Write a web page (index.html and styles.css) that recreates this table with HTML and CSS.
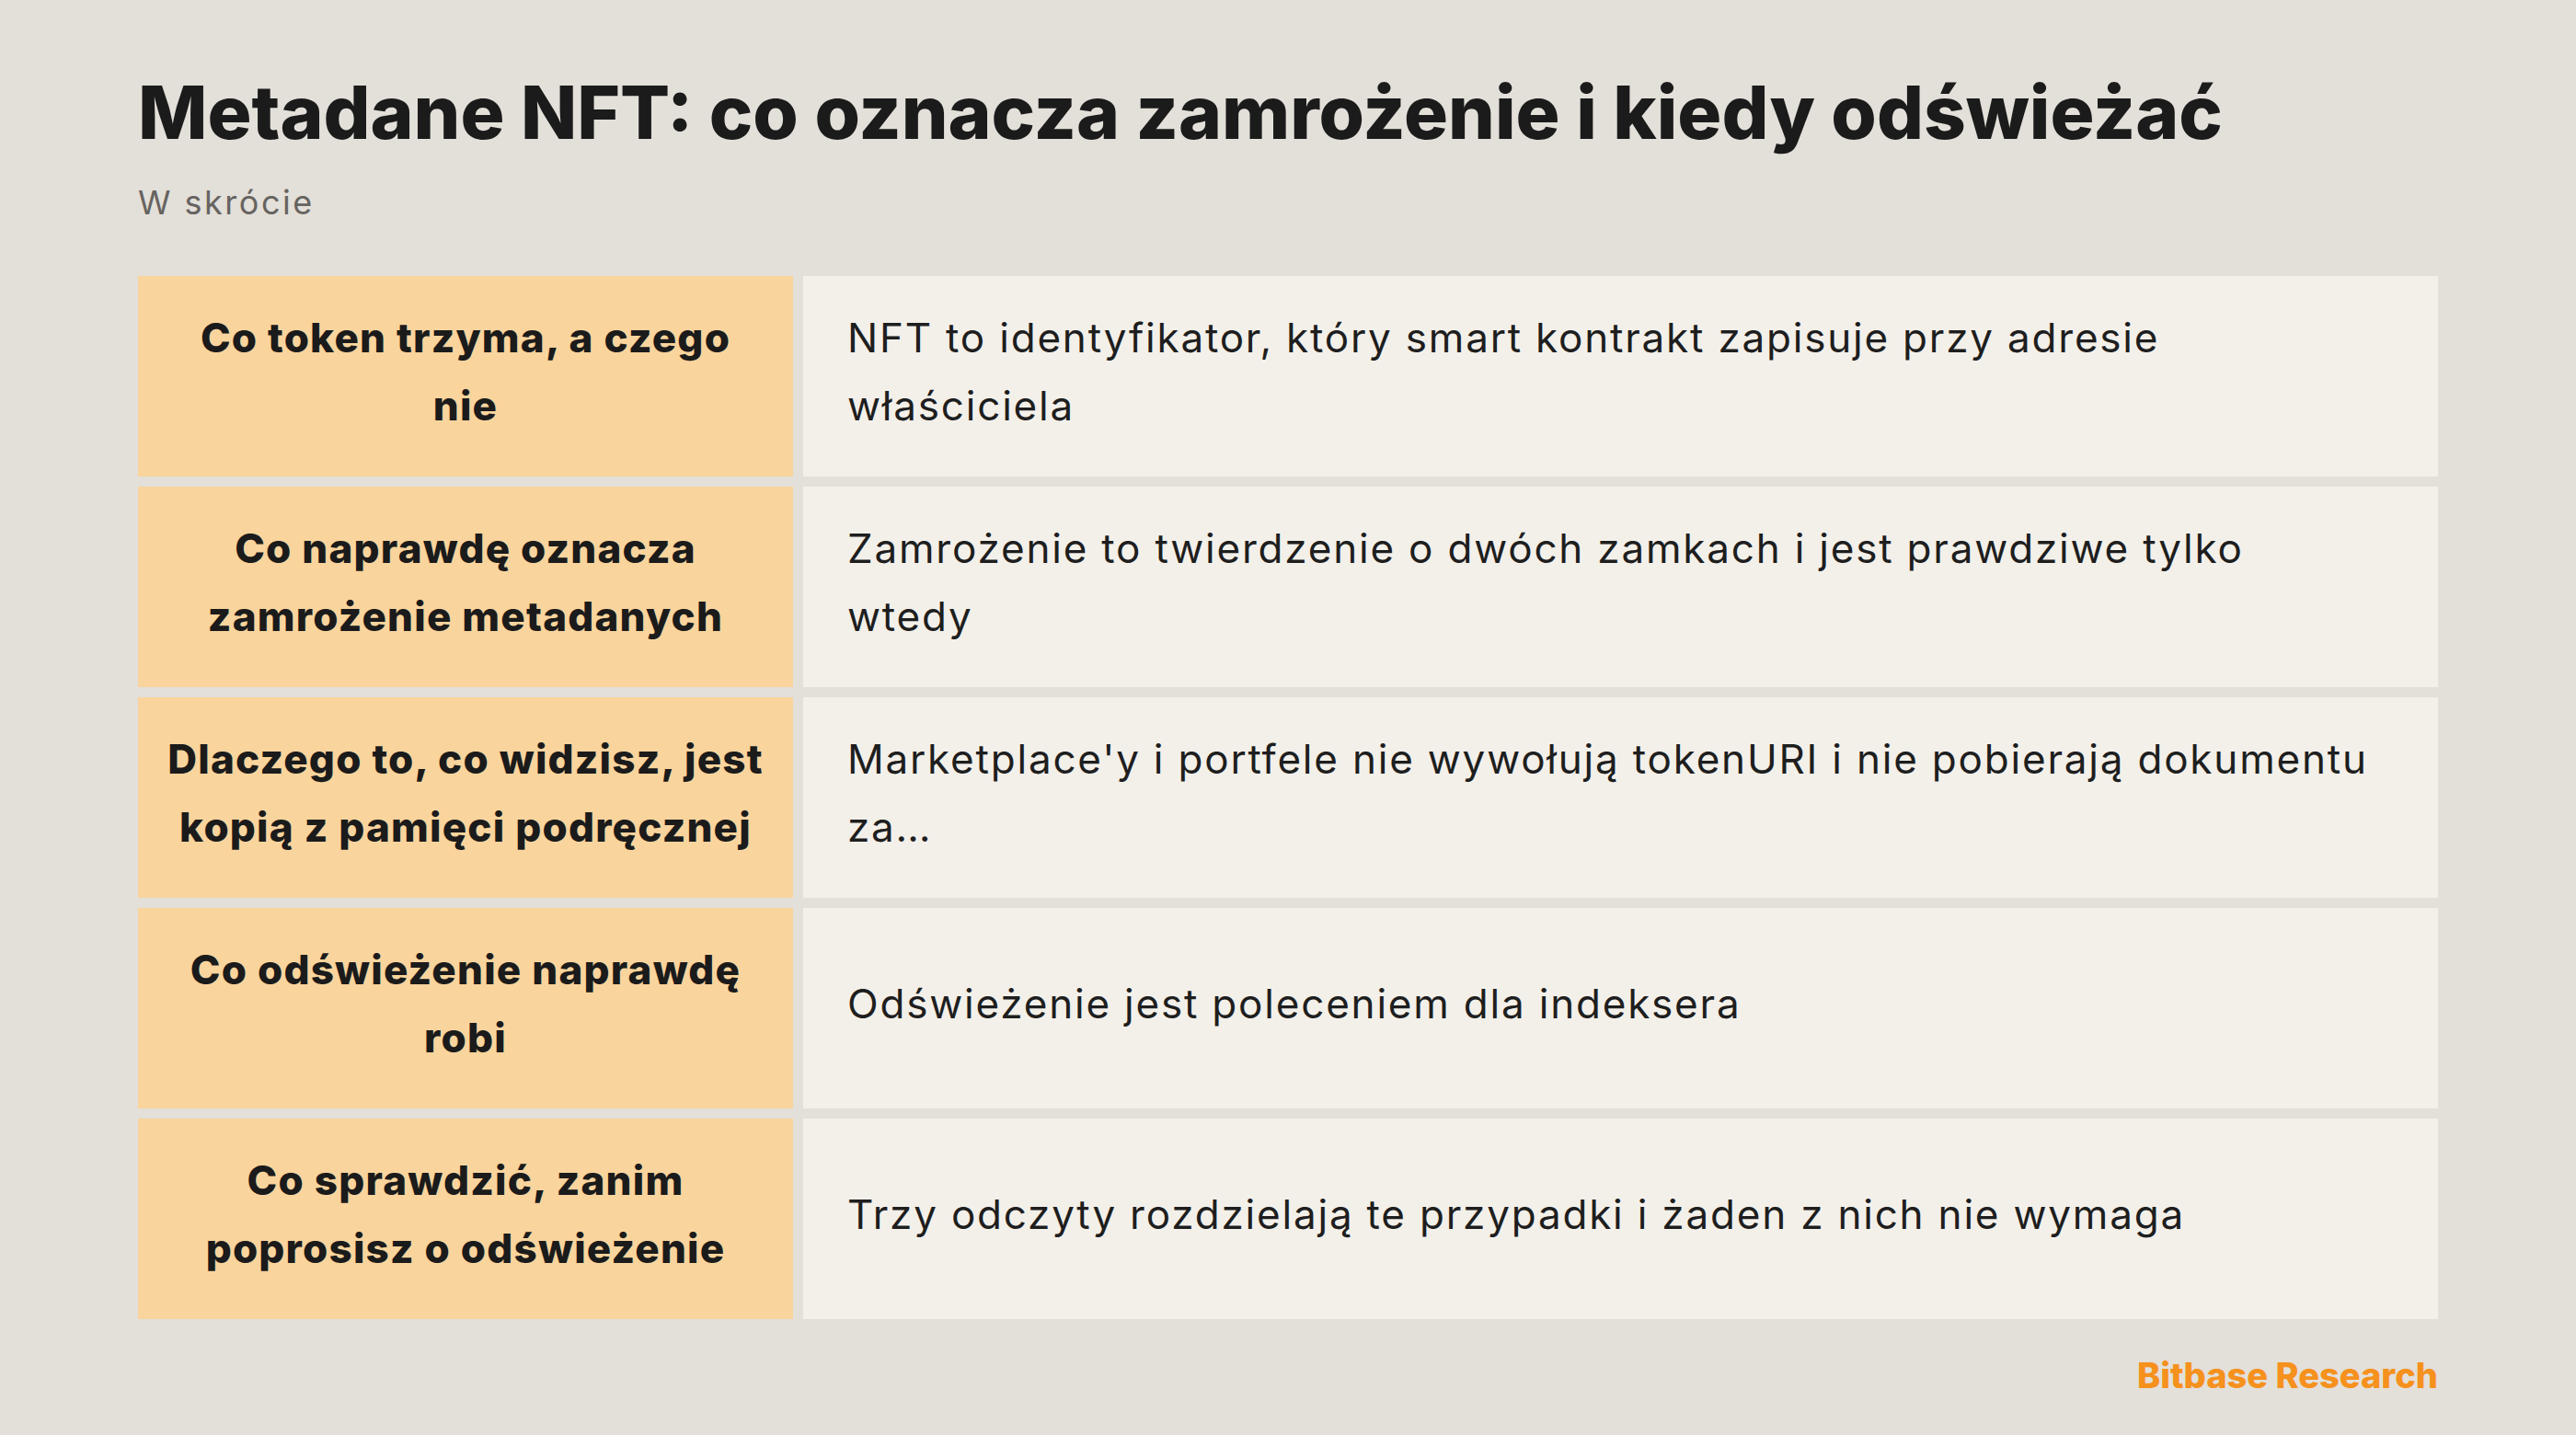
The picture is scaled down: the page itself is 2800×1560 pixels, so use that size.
FILE: index.html
```html
<!DOCTYPE html>
<html lang="pl">
<head>
<meta charset="utf-8">
<title>Metadane NFT</title>
<link rel="stylesheet" href="styles.css">
</head>
<body>
<div class="page">
  <header class="head">
    <h1 class="title">Metadane NFT: co oznacza zamrożenie i kiedy odświeżać</h1>
    <p class="subtitle">W skrócie</p>
  </header>
  <div class="table">
    <div class="key">Co token trzyma, a czego<br>nie</div>
    <div class="val">NFT to identyfikator, który smart kontrakt zapisuje przy adresie<br>właściciela</div>
    <div class="key">Co naprawdę oznacza<br>zamrożenie metadanych</div>
    <div class="val">Zamrożenie to twierdzenie o dwóch zamkach i jest prawdziwe tylko<br>wtedy</div>
    <div class="key">Dlaczego to, co widzisz, jest<br>kopią z pamięci podręcznej</div>
    <div class="val">Marketplace'y i portfele nie wywołują tokenURI i nie pobierają dokumentu<br>za…</div>
    <div class="key">Co odświeżenie naprawdę<br>robi</div>
    <div class="val">Odświeżenie jest poleceniem dla indeksera</div>
    <div class="key">Co sprawdzić, zanim<br>poprosisz o odświeżenie</div>
    <div class="val">Trzy odczyty rozdzielają te przypadki i żaden z nich nie wymaga</div>
  </div>
  <footer class="brand">Bitbase Research</footer>
</div>
</body>
</html>
```
FILE: styles.css
```css
html, body {
  margin: 0;
  padding: 0;
  background: #e3dfd9;
}
.page {
  width: 2800px;
  height: 1560px;
  box-sizing: border-box;
  padding: 74px 150px 0;
  display: flex;
  flex-direction: column;
  font-family: Inter, "Open Sans", "Liberation Sans", sans-serif;
  color: #1c1c1c;
}
.title {
  margin: 0;
  font-size: 80px;
  line-height: 96px;
  font-weight: 800;
  letter-spacing: 0;
  color: #1b1b1b;
}
.subtitle {
  margin: 26px 0 0;
  font-size: 36px;
  line-height: 48px;
  letter-spacing: 2.5px;
  color: #666360;
}
.table {
  margin-top: 56px;
  display: grid;
  grid-template-columns: 712px 1fr;
  grid-auto-rows: 218px;
  gap: 11px;
}
.key {
  background: #f9d49d;
  padding: 0 30px 10px;
  display: flex;
  align-items: center;
  justify-content: center;
  text-align: center;
  font-size: 44px;
  line-height: 74px;
  font-weight: 800;
  letter-spacing: 1.2px;
  color: #1b1b1b;
}
.val {
  background: #f3f0ea;
  padding: 0 48px 10px;
  display: flex;
  align-items: center;
  font-size: 44px;
  line-height: 74px;
  font-weight: 400;
  letter-spacing: 1.8px;
  color: #1e1e1e;
}
.brand {
  margin-top: 38px;
  align-self: flex-end;
  font-size: 38px;
  line-height: 46px;
  font-weight: 800;
  letter-spacing: 0;
  color: #f5911c;
}
```
